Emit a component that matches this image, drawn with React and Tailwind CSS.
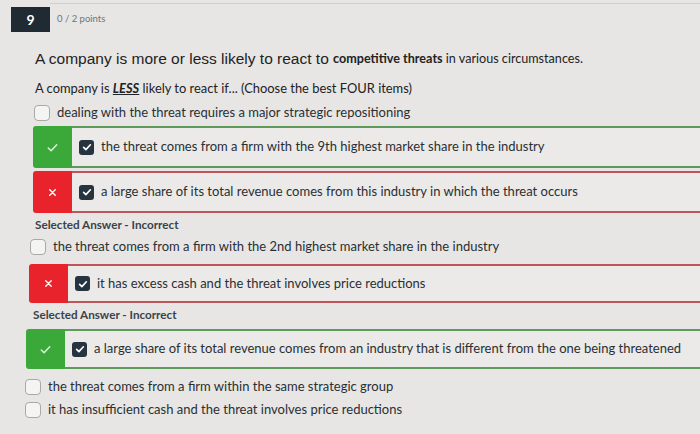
import React from "react";

function Check({ className = "", w = 2 }) {
  return (
    <svg viewBox="0 0 16 16" className={className} fill="none" stroke="currentColor" strokeWidth={w} strokeLinecap="round" strokeLinejoin="round">
      <path d="M3.5 8.5l3 3 6-6.5" />
    </svg>
  );
}

function Cross({ className = "" }) {
  return (
    <svg viewBox="0 0 16 16" className={className} fill="none" stroke="currentColor" strokeWidth="2" strokeLinecap="round">
      <path d="M4 4l8 8M12 4l-8 8" />
    </svg>
  );
}

function EmptyBox() {
  return <span className="inline-block w-[16px] h-[16px] rounded-[4px] border border-[#a9a9a9] bg-[#f4f4f3] shrink-0" />;
}

function CheckedBox() {
  return (
    <span className="inline-flex items-center justify-center w-[15px] h-[15px] rounded-[3px] bg-[#263440] text-white shrink-0">
      <Check className="w-[12px] h-[12px]" w={2.2} />
    </span>
  );
}

function Plain({ ml, h, text }) {
  return (
    <div className={`flex items-center gap-[7px] ${ml} ${h}`}>
      <EmptyBox />
      <span className="text-[13px] text-[#2a2f33]">{text}</span>
    </div>
  );
}

function Marked({ ok, ml, h, text, mt }) {
  const block = ok ? "bg-[#3aa93a]" : "bg-[#e8232b]";
  const line = ok ? "border-[#5e9b5a]" : "border-[#c0545c]";
  return (
    <div className={`flex ${ml} ${h} ${mt}`}>
      <div className={`w-[39px] ${block} rounded-l-[3px] flex items-center justify-center shrink-0 ${ok ? "text-[#d9f2d4]" : "text-white"}`}>
        {ok ? <Check className="w-[15px] h-[15px]" w={1.6} /> : <Cross className="w-[11px] h-[11px]" />}
      </div>
      <div className={`flex-1 flex items-center gap-[7px] pl-[7px] border-y-2 ${line} bg-[#ebeae8]`}>
        <CheckedBox />
        <span className="text-[13px] text-[#2a2f33] whitespace-nowrap">{text}</span>
      </div>
    </div>
  );
}

export default function App() {
  return (
    <div className="w-[700px] h-[434px] overflow-hidden bg-[#e7e6e4] relative" style={{ fontFamily: "Lato, 'Open Sans', sans-serif" }}>
      <div className="h-[4px] border-b border-[#cfcecc] ml-[50px]" />
      <div className="flex items-center h-[27px] mt-[2px]">
        <div className="ml-[11px] w-[39px] h-[25px] bg-[#1f2a33] text-white font-bold text-[14px] flex items-center justify-center">9</div>
        <div className="ml-[7px] text-[9.5px] text-[#6d7479]">0 / 2 points</div>
      </div>
      <div className="ml-[35px] mt-[17px] h-[18px] flex items-center text-[12.6px] text-[#222]">
        <span className="text-[15.5px]" style={{ fontFamily: "'Liberation Sans', Arial, sans-serif" }}>A company is more or less likely to react to&nbsp;</span>
        <span className="font-bold">competitive threats</span>
        <span>&nbsp;in various circumstances.</span>
      </div>
      <div className="ml-[35px] mt-[12px] h-[18px] flex items-center text-[12.9px] text-[#222]">
        <span>A company is&nbsp;</span>
        <span className="font-bold italic underline">LESS</span>
        <span>&nbsp;likely to react if... (Choose the best FOUR items)</span>
      </div>
      <Plain ml="ml-[34px] mt-[5px]" h="h-[20px]" text="dealing with the threat requires a major strategic repositioning" />
      <Marked ok ml="ml-[33px]" mt="mt-[3px]" h="h-[42px]" text="the threat comes from a firm with the 9th highest market share in the industry" />
      <Marked ml="ml-[33px]" mt="mt-[3px]" h="h-[42px]" text="a large share of its total revenue comes from this industry in which the threat occurs" />
      <div className="ml-[35px] h-[18px] mt-[3px] flex items-center text-[11.7px] font-bold text-[#3a4248]">Selected Answer - Incorrect</div>
      <Plain ml="ml-[30px] mt-[3px]" h="h-[20px]" text="the threat comes from a firm with the 2nd highest market share in the industry" />
      <Marked ml="ml-[29px]" mt="mt-[7px]" h="h-[39px]" text="it has excess cash and the threat involves price reductions" />
      <div className="ml-[33px] h-[18px] mt-[3px] flex items-center text-[11.7px] font-bold text-[#3a4248]">Selected Answer - Incorrect</div>
      <Marked ok ml="ml-[26px]" mt="mt-[5px]" h="h-[40px]" text="a large share of its total revenue comes from an industry that is different from the one being threatened" />
      <Plain ml="ml-[25px] mt-[8px]" h="h-[20px]" text="the threat comes from a firm within the same strategic group" />
      <Plain ml="ml-[25px] mt-[3px]" h="h-[20px]" text="it has insufficient cash and the threat involves price reductions" />
    </div>
  );
}
